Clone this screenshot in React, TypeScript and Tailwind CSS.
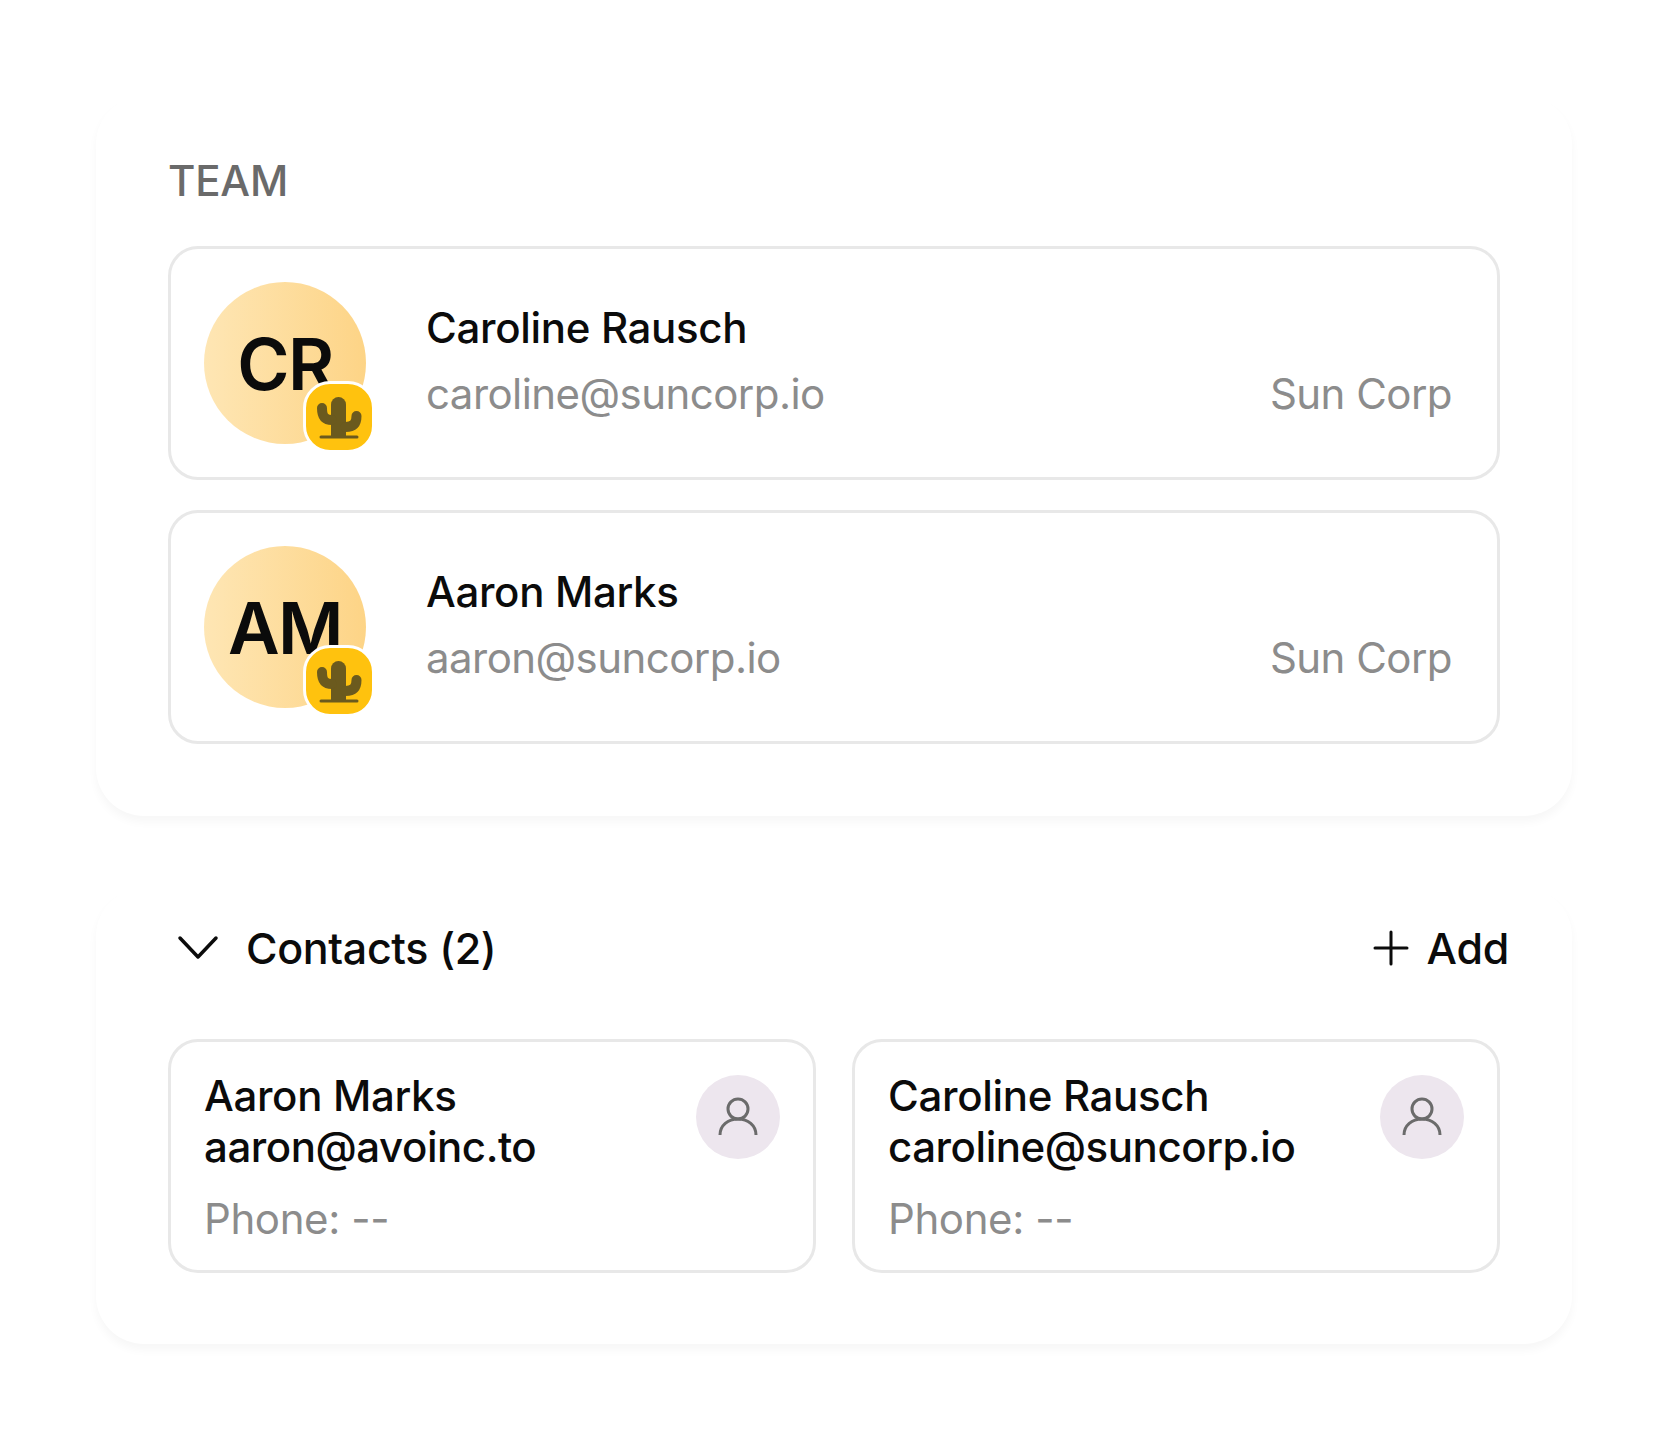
const font = { fontFamily: 'Inter, "Liberation Sans", sans-serif' };

function Cactus() {
  return (
    <svg viewBox="0 0 70 70" className="w-full h-full" fill="none">
      <path d="M28 55V23.500a7.500 7.500 0 0 1 15 0V55z" fill="#6b5a1e" />
      <path d="M19 27c0 9 3 12 10 12" stroke="#6b5a1e" strokeWidth="10" strokeLinecap="round" />
      <path d="M53.500 35c0 8-4 11-11 11" stroke="#6b5a1e" strokeWidth="10" strokeLinecap="round" />
      <path d="M18 56h36" stroke="#6b5a1e" strokeWidth="3" strokeLinecap="round" />
    </svg>
  );
}

function PersonIcon() {
  return (
    <svg viewBox="0 0 84 84" className="w-[84px] h-[84px]" fill="none" stroke="#6b6b6b" strokeWidth="3">
      <circle cx="42" cy="34" r="10" />
      <path d="M24 60c0-9.500 8-16 18-16s18 6.500 18 16" />
    </svg>
  );
}

function TeamRow({ initials, name, email }: { initials: string; name: string; email: string }) {
  return (
    <div className="h-[234px] rounded-[30px] border-[3px] border-[#e8e8e8] pl-[33px] pr-[45px] flex items-center">
      <div className="relative w-[162px] h-[162px] shrink-0 rounded-full bg-gradient-to-r from-[#fee6b4] to-[#fdd486] flex items-center justify-center">
        <span className="text-[71px] font-semibold text-[#0b0b0b] leading-none tracking-[-1.5px] pt-[2px]">{initials}</span>
        <div className="absolute left-[99px] top-[99px] w-[72px] h-[72px] rounded-[27px] border-[3px] border-white bg-[#ffc20e]">
          <div className="-m-[3px] w-[70px] h-[70px]">
            <Cactus />
          </div>
        </div>
      </div>
      <div className="ml-[60px] flex-1 flex flex-col gap-[15px] -mt-[6px]">
        <div className="text-[42px] leading-[51px] font-medium tracking-[-0.32px] text-[#0b0b0b]">{name}</div>
        <div className="flex justify-between text-[42px] leading-[51px] tracking-[-0.55px] text-[#8c8c8c]">
          <span>{email}</span>
          <span>Sun Corp</span>
        </div>
      </div>
    </div>
  );
}

function ContactCard({ name, email }: { name: string; email: string }) {
  return (
    <div className="h-[234px] rounded-[30px] border-[3px] border-[#e8e8e8] pl-[33px] pr-[33px] pt-[28px] flex justify-between">
      <div>
        <div className="text-[42px] leading-[51px] font-medium tracking-[-0.32px] text-[#0b0b0b]">{name}</div>
        <div className="text-[42px] leading-[51px] font-medium tracking-[-0.45px] text-[#0b0b0b]">{email}</div>
        <div className="mt-[21px] text-[42px] leading-[51px] tracking-[-0.4px] text-[#8c8c8c]">Phone: --</div>
      </div>
      <div className="w-[84px] h-[84px] mt-[5px] shrink-0 rounded-full bg-[#ede6ee]">
        <PersonIcon />
      </div>
    </div>
  );
}

export default function App() {
  return (
    <div className="w-[1668px] h-[1440px] bg-white pt-[96px] px-[96px]" style={font}>
      <section className="h-[720px] rounded-[48px] bg-white shadow-[0_6px_10px_rgba(0,0,0,0.035)] px-[72px] pt-[70px]">
        <h2 className="text-[42px] leading-[30px] font-medium tracking-[-0.2px] text-[#6a6a6a] h-[80px]">TEAM</h2>
        <div className="flex flex-col gap-[30px]">
          <TeamRow initials="CR" name="Caroline Rausch" email="caroline@suncorp.io" />
          <TeamRow initials="AM" name="Aaron Marks" email="aaron@suncorp.io" />
        </div>
      </section>

      <section className="mt-[72px] h-[456px] rounded-[48px] bg-white shadow-[0_6px_10px_rgba(0,0,0,0.035)] px-[72px] pt-[36px]">
        <div className="flex items-center justify-between h-[48px] -mr-[9px] mb-[67px]">
          <div className="flex items-center">
            <svg viewBox="0 0 48 48" className="w-[48px] h-[48px] ml-[6px]" fill="none" stroke="#0b0b0b" strokeWidth="3.500" strokeLinecap="round" strokeLinejoin="round">
              <path d="M6 14l18 19 18-19" />
            </svg>
            <span className="ml-[24px] text-[43px] font-medium tracking-[-0.35px] text-[#0b0b0b]">Contacts (2)</span>
          </div>
          <div className="flex items-center">
            <svg viewBox="0 0 36 36" className="w-[36px] h-[36px]" fill="none" stroke="#0b0b0b" strokeWidth="3" strokeLinecap="round">
              <path d="M18 2v32M2 18h32" />
            </svg>
            <span className="ml-[18px] text-[43px] font-medium tracking-[-0.3px] text-[#0b0b0b]">Add</span>
          </div>
        </div>
        <div className="grid grid-cols-2 gap-[36px]">
          <ContactCard name="Aaron Marks" email="aaron@avoinc.to" />
          <ContactCard name="Caroline Rausch" email="caroline@suncorp.io" />
        </div>
      </section>
    </div>
  );
}
